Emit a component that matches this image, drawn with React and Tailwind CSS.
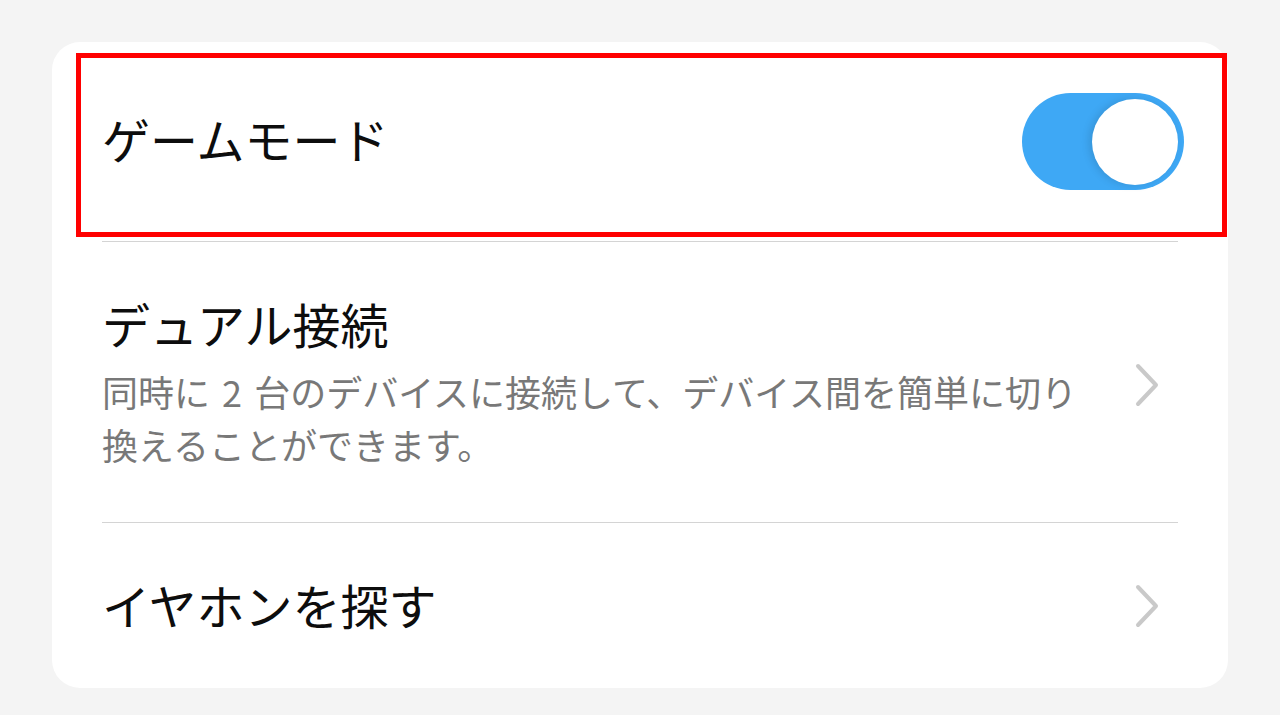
import React from "react";

function Chevron() {
  return (
    <svg width="26" height="46" viewBox="0 0 26 46" className="shrink-0">
      <path d="M4 4 L22 23 L4 42" fill="none" stroke="#c9c9c9" strokeWidth="4" strokeLinecap="round" strokeLinejoin="round" />
    </svg>
  );
}

export default function App() {
  const font = { fontFamily: '"Noto Sans CJK JP", "Noto Sans", sans-serif' };
  return (
    <div className="w-[1280px] h-[715px] bg-[#f4f4f4] pt-[42px] pl-[52px]" style={font}>
      <div className="relative w-[1176px] h-[646px] bg-white rounded-[28px] px-[50px]">
        {/* Row 1 */}
        <div className="h-[199px] flex items-center justify-between">
          <div className="text-[48px] leading-[60px] text-[#0d0d0d] mb-[8px]">ゲームモード</div>
          <div className="relative w-[162px] h-[97px] rounded-full bg-[#3ea8f5] -mr-[6px]">
            <div className="absolute right-[6px] top-[5.5px] w-[86px] h-[86px] rounded-full bg-white shadow-[-3px_0_8px_rgba(0,0,0,0.12)]" />
          </div>
        </div>
        <div className="h-px bg-[#d4d4d4]" />
        {/* Row 2 */}
        <div className="h-[280px] flex items-center justify-between">
          <div>
            <div className="text-[48px] leading-[60px] text-[#0d0d0d]">デュアル接続</div>
            <div className="mt-[12px] text-[36px] leading-[53px] text-[#787878]">
              同時に<span className="px-[4px]"> 2 </span>台のデバイスに接続して、デバイス間を簡単に切り
              <br />
              換えることができます。
            </div>
          </div>
          <div className="mr-[18px] mt-[6px]">
            <Chevron />
          </div>
        </div>
        <div className="h-px bg-[#d4d4d4]" />
        {/* Row 3 */}
        <div className="h-[165px] flex items-center justify-between pb-[4px]">
          <div className="text-[48px] leading-[60px] text-[#0d0d0d]">イヤホンを探す</div>
          <div className="mr-[18px] mt-[4px]">
            <Chevron />
          </div>
        </div>
        {/* red annotation box */}
        <div className="absolute left-[24px] top-[11px] w-[1151px] h-[184px] border-[5px] border-[#ff0000] pointer-events-none" />
      </div>
    </div>
  );
}
